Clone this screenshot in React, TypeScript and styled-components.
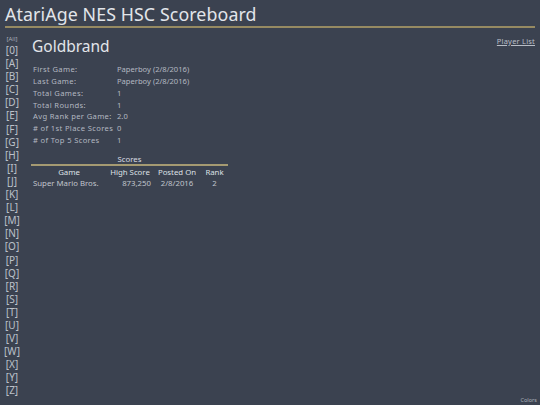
import React from "react";
import styled, { createGlobalStyle } from "styled-components";

const Global = createGlobalStyle`
  html, body { margin: 0; padding: 0; }
  body {
    background: #3b4250;
    color: #d3d7de;
    font-family: "Noto Sans", "DejaVu Sans", sans-serif;
    width: 540px;
    height: 405px;
    overflow: hidden;
  }
`;

const Page = styled.div`
  position: relative;
  width: 540px;
  height: 405px;
`;

const Header = styled.h1`
  margin: 0 5px;
  padding: 3px 0 1px;
  font-size: 17.8px;
  font-weight: 400;
  line-height: 22px;
  letter-spacing: 0.1px;
  color: #e2e5ea;
  border-bottom: 2px solid #968a62;
`;

const Body = styled.div`
  display: flex;
  padding-top: 7px;
`;

const Sidebar = styled.nav`
  width: 22px;
  margin-left: 1px;
  display: flex;
  flex-direction: column;
  align-items: center;
`;

const AllLink = styled.a`
  font-size: 6px;
  line-height: 9px;
  color: #a9aeb8;
  text-decoration: none;
`;

const Letter = styled.a`
  font-size: 10px;
  line-height: 13.1px;
  color: #bcc1ca;
  text-decoration: none;
`;

const Main = styled.main`
  flex: 1;
  padding-left: 8px;
  padding-right: 5px;
`;

const TopRow = styled.div`
  display: flex;
  justify-content: space-between;
  align-items: flex-start;
`;

const Name = styled.h2`
  margin: 1px 0 0 1px;
  font-size: 15.5px;
  line-height: 20px;
  font-weight: 400;
  color: #e2e5ea;
`;

const PlayerList = styled.a`
  margin-top: 1px;
  font-size: 7.5px;
  letter-spacing: 0.2px;
  color: #b8bdc6;
  text-decoration: underline;
`;

const Stats = styled.dl`
  display: grid;
  grid-template-columns: 84px auto;
  margin: 8px 0 0 2px;
  font-size: 7.6px;
  line-height: 11.85px;
  color: #b3b8c1;
  dt, dd { margin: 0; }
  dt { letter-spacing: 0.35px; }
`;

const ScoreTable = styled.table`
  margin-top: 7px;
  border-collapse: collapse;
  table-layout: fixed;
  font-size: 7.8px;
  color: #c0c4cc;
  width: 197px;
  caption {
    font-size: 7.8px;
    line-height: 10px;
    color: #d9dce2;
    border-bottom: 2px solid #a59a72;
  }
  th {
    font-weight: 400;
    color: #dde0e5;
    line-height: 12px;
    padding: 0 1px;
    white-space: nowrap;
  }
  td {
    line-height: 11px;
    padding: 0 2px;
    white-space: nowrap;
  }
`;

const Col = styled.col<{ $w: number }>`
  width: ${(p) => p.$w}px;
`;

const Cell = styled.td<{ $align: "left" | "right" | "center" }>`
  text-align: ${(p) => p.$align};
`;

const ColorsLink = styled.a`
  position: absolute;
  right: 3px;
  bottom: 1px;
  font-size: 5.5px;
  color: #aab0ba;
  text-decoration: none;
`;

const letters = ["0", ..."ABCDEFGHIJKLMNOPQRSTUVWXYZ".split("")];

const stats: [string, string][] = [
  ["First Game:", "Paperboy (2/8/2016)"],
  ["Last Game:", "Paperboy (2/8/2016)"],
  ["Total Games:", "1"],
  ["Total Rounds:", "1"],
  ["Avg Rank per Game:", "2.0"],
  ["# of 1st Place Scores", "0"],
  ["# of Top 5 Scores", "1"],
];

export default function App() {
  return (
    <Page>
      <Global />
      <Header>AtariAge NES HSC Scoreboard</Header>
      <Body>
        <Sidebar>
          <AllLink href="#">[All]</AllLink>
          {letters.map((l) => (
            <Letter key={l} href="#">
              [{l}]
            </Letter>
          ))}
        </Sidebar>
        <Main>
          <TopRow>
            <Name>Goldbrand</Name>
            <PlayerList href="#">Player List</PlayerList>
          </TopRow>
          <Stats>
            {stats.map(([k, v]) => (
              <React.Fragment key={k}>
                <dt>{k}</dt>
                <dd>{v}</dd>
              </React.Fragment>
            ))}
          </Stats>
          <ScoreTable>
            <caption>Scores</caption>
            <colgroup>
              <Col $w={76} />
              <Col $w={46} />
              <Col $w={48} />
              <Col $w={27} />
            </colgroup>
            <thead>
              <tr>
                <th>Game</th>
                <th>High Score</th>
                <th>Posted On</th>
                <th>Rank</th>
              </tr>
            </thead>
            <tbody>
              <tr>
                <Cell $align="left">Super Mario Bros.</Cell>
                <Cell $align="right">873,250</Cell>
                <Cell $align="center">2/8/2016</Cell>
                <Cell $align="center">2</Cell>
              </tr>
            </tbody>
          </ScoreTable>
        </Main>
      </Body>
      <ColorsLink href="#">Colors</ColorsLink>
    </Page>
  );
}
